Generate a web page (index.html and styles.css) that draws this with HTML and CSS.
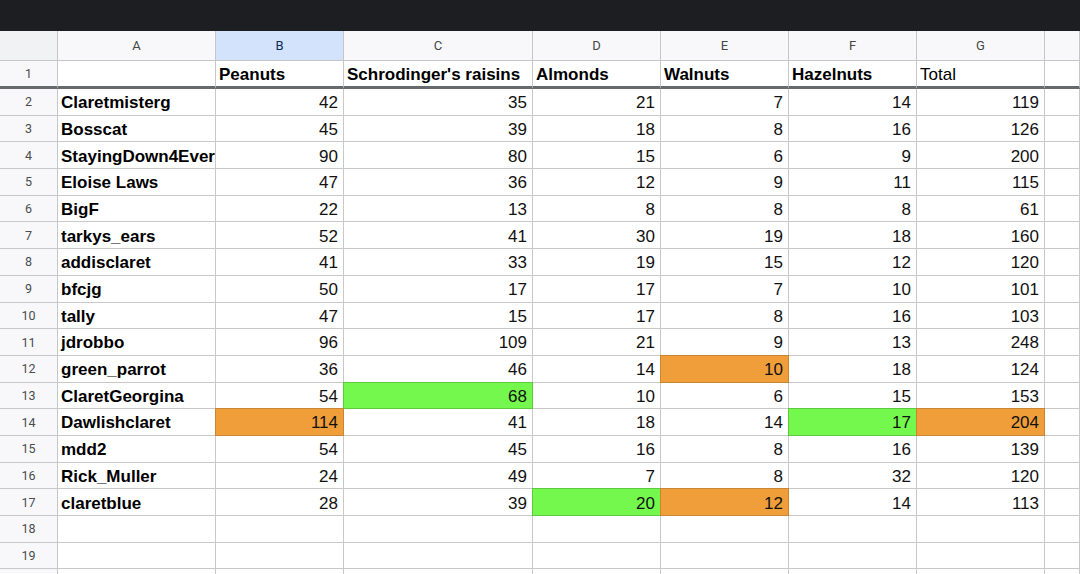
FILE: index.html
```html
<!DOCTYPE html>
<html>
<head>
<meta charset="utf-8">
<link rel="stylesheet" href="styles.css">
</head>
<body>
<div class="topbar"></div>
<div class="sheet">
  <div class="row hdr">
    <div class="corner"></div>
    <div class="ch">A</div><div class="ch sel">B</div><div class="ch">C</div><div class="ch">D</div><div class="ch">E</div><div class="ch">F</div><div class="ch">G</div><div class="ch"></div>
  </div>
  <div class="row r1">
    <div class="rh">1</div>
    <div class="c"></div><div class="c b">Peanuts</div><div class="c b">Schrodinger's raisins</div><div class="c b">Almonds</div><div class="c b">Walnuts</div><div class="c b">Hazelnuts</div><div class="c">Total</div><div class="c"></div>
  </div>
  <div class="row"><div class="rh">2</div><div class="c b">Claretmisterg</div><div class="c n">42</div><div class="c n">35</div><div class="c n">21</div><div class="c n">7</div><div class="c n">14</div><div class="c n">119</div><div class="c"></div></div>
  <div class="row"><div class="rh">3</div><div class="c b">Bosscat</div><div class="c n">45</div><div class="c n">39</div><div class="c n">18</div><div class="c n">8</div><div class="c n">16</div><div class="c n">126</div><div class="c"></div></div>
  <div class="row"><div class="rh">4</div><div class="c b">StayingDown4Ever</div><div class="c n">90</div><div class="c n">80</div><div class="c n">15</div><div class="c n">6</div><div class="c n">9</div><div class="c n">200</div><div class="c"></div></div>
  <div class="row"><div class="rh">5</div><div class="c b">Eloise Laws</div><div class="c n">47</div><div class="c n">36</div><div class="c n">12</div><div class="c n">9</div><div class="c n">11</div><div class="c n">115</div><div class="c"></div></div>
  <div class="row"><div class="rh">6</div><div class="c b">BigF</div><div class="c n">22</div><div class="c n">13</div><div class="c n">8</div><div class="c n">8</div><div class="c n">8</div><div class="c n">61</div><div class="c"></div></div>
  <div class="row"><div class="rh">7</div><div class="c b">tarkys_ears</div><div class="c n">52</div><div class="c n">41</div><div class="c n">30</div><div class="c n">19</div><div class="c n">18</div><div class="c n">160</div><div class="c"></div></div>
  <div class="row"><div class="rh">8</div><div class="c b">addisclaret</div><div class="c n">41</div><div class="c n">33</div><div class="c n">19</div><div class="c n">15</div><div class="c n">12</div><div class="c n">120</div><div class="c"></div></div>
  <div class="row"><div class="rh">9</div><div class="c b">bfcjg</div><div class="c n">50</div><div class="c n">17</div><div class="c n">17</div><div class="c n">7</div><div class="c n">10</div><div class="c n">101</div><div class="c"></div></div>
  <div class="row"><div class="rh">10</div><div class="c b">tally</div><div class="c n">47</div><div class="c n">15</div><div class="c n">17</div><div class="c n">8</div><div class="c n">16</div><div class="c n">103</div><div class="c"></div></div>
  <div class="row"><div class="rh">11</div><div class="c b">jdrobbo</div><div class="c n">96</div><div class="c n">109</div><div class="c n">21</div><div class="c n">9</div><div class="c n">13</div><div class="c n">248</div><div class="c"></div></div>
  <div class="row"><div class="rh">12</div><div class="c b">green_parrot</div><div class="c n">36</div><div class="c n">46</div><div class="c n">14</div><div class="c n o">10</div><div class="c n">18</div><div class="c n">124</div><div class="c"></div></div>
  <div class="row"><div class="rh">13</div><div class="c b">ClaretGeorgina</div><div class="c n">54</div><div class="c n g">68</div><div class="c n">10</div><div class="c n">6</div><div class="c n">15</div><div class="c n">153</div><div class="c"></div></div>
  <div class="row"><div class="rh">14</div><div class="c b">Dawlishclaret</div><div class="c n o">114</div><div class="c n">41</div><div class="c n">18</div><div class="c n">14</div><div class="c n g">17</div><div class="c n o">204</div><div class="c"></div></div>
  <div class="row"><div class="rh">15</div><div class="c b">mdd2</div><div class="c n">54</div><div class="c n">45</div><div class="c n">16</div><div class="c n">8</div><div class="c n">16</div><div class="c n">139</div><div class="c"></div></div>
  <div class="row"><div class="rh">16</div><div class="c b">Rick_Muller</div><div class="c n">24</div><div class="c n">49</div><div class="c n">7</div><div class="c n">8</div><div class="c n">32</div><div class="c n">120</div><div class="c"></div></div>
  <div class="row"><div class="rh">17</div><div class="c b">claretblue</div><div class="c n">28</div><div class="c n">39</div><div class="c n g">20</div><div class="c n o">12</div><div class="c n">14</div><div class="c n">113</div><div class="c"></div></div>
  <div class="row"><div class="rh">18</div><div class="c"></div><div class="c"></div><div class="c"></div><div class="c"></div><div class="c"></div><div class="c"></div><div class="c"></div><div class="c"></div></div>
  <div class="row"><div class="rh">19</div><div class="c"></div><div class="c"></div><div class="c"></div><div class="c"></div><div class="c"></div><div class="c"></div><div class="c"></div><div class="c"></div></div>
  <div class="row"><div class="rh"></div><div class="c"></div><div class="c"></div><div class="c"></div><div class="c"></div><div class="c"></div><div class="c"></div><div class="c"></div><div class="c"></div></div>
</div>
</body>
</html>
```

FILE: styles.css
```css
html, body {
  margin: 0;
  padding: 0;
  background: #ffffff;
  overflow: hidden;
  width: 1080px;
  height: 574px;
}

.topbar {
  height: 31px;
  background: #1d1e22;
}

.sheet {
  font-family: "Liberation Sans", Arial, sans-serif;
  color: #000;
}

.row {
  display: grid;
  grid-template-columns: 58px 158px 128px 189px 128px 128px 128px 128px 1fr;
  height: 26.7px;
}

.row > div {
  box-sizing: border-box;
  border-right: 1px solid #c8c8c8;
  border-bottom: 1px solid #c8c8c8;
  overflow: hidden;
  white-space: nowrap;
  min-width: 0;
}

.row.hdr {
  height: 30px;
}

.corner {
  background: #f1f2f4;
}

.row.hdr > div {
  border-color: #c4c6c8;
}

.ch {
  background: #f8f8fb;
  display: flex;
  align-items: center;
  justify-content: center;
  font-family: Roboto, "Liberation Sans", sans-serif;
  font-size: 13px;
  color: #454746;
}

.ch.sel {
  background: #d4e3fc;
  color: #0b2a5c;
}

.rh {
  background: #f8f8fb;
  display: flex;
  align-items: center;
  justify-content: center;
  font-family: Roboto, "Liberation Sans", sans-serif;
  font-size: 12.5px;
  color: #4a4c4e;
  border-right-color: #c4c6c8 !important;
}

.row.r1 {
  height: 28px;
}

.row.r1 > div {
  border-bottom: 3px solid #676a6c;
}

.c {
  display: flex;
  align-items: flex-end;
  font-size: 17px;
  line-height: 20px;
  padding: 0 5px 1.5px 3px;
}

.row.r1 .c {
  padding-bottom: 1px;
}

.c.b {
  font-weight: bold;
}

.c.n {
  justify-content: flex-end;
  color: #111;
}

.c.o {
  background: #f09e39;
  border-right-color: #c98532;
  border-bottom-color: #c98532;
  box-shadow: 0 -1px 0 0 #c98532, -1px 0 0 0 #c98532, -1px -1px 0 0 #c98532;
}

.c.g {
  background: #75f84d;
  border-right-color: #5cca3c;
  border-bottom-color: #5cca3c;
  box-shadow: 0 -1px 0 0 #5cca3c, -1px 0 0 0 #5cca3c, -1px -1px 0 0 #5cca3c;
}
```
